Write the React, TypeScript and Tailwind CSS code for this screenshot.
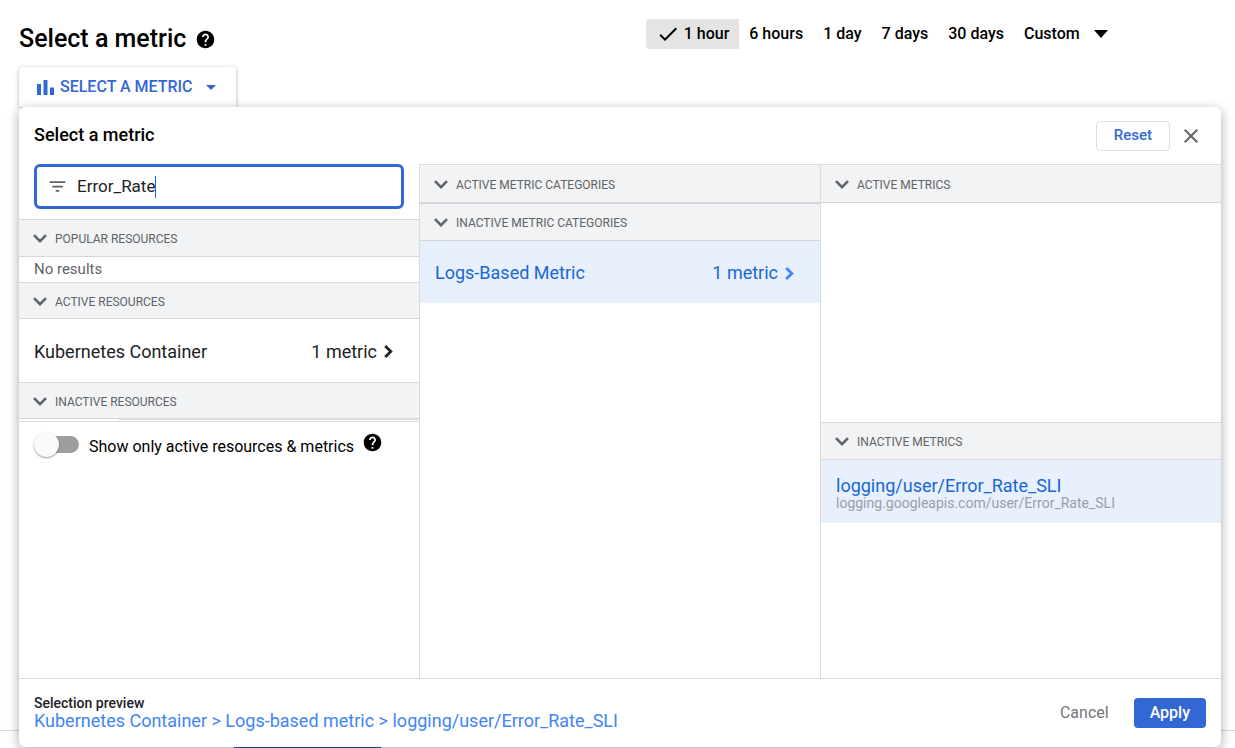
import { ReactNode, useState } from "react";

import { MdArrowDropDown, MdCheck, MdClose, MdFilterList, MdHelp } from "react-icons/md";

const timeRanges = ["1 hour", "6 hours", "1 day", "7 days", "30 days"];

const ChevronDown = () => (
  <svg viewBox="0 0 14 10" className="h-[10px] w-[14px] shrink-0" fill="none" stroke="#5f6368" strokeWidth="2.6">
    <path d="M1 1.2 7 7.2 13 1.2" />
  </svg>
);

const ChevronRight = () => (
  <svg viewBox="0 0 9 13" className="h-[13px] w-[9px] shrink-0" fill="none" stroke="currentColor" strokeWidth="2.8">
    <path d="M1.2 1 6.8 6.5 1.2 12" />
  </svg>
);

const BarsIcon = () => (
  <svg viewBox="0 0 17 15" className="h-[15px] w-[17px] shrink-0" fill="currentColor">
    <path d="M0 4h4v11H0zM6.5 0h4v15h-4zM13 7.5h4V15h-4z" />
  </svg>
);

interface SectionHeaderProps {
  text: string;
  classes?: string;
}

const SectionHeader = ({ text, classes = "h-[38px]" }: SectionHeaderProps) => (
  <h3 className={`border-[#d5d7da] bg-[#f1f3f4] ${classes}`}>
    <button type="button" className="flex h-full w-full items-center gap-2 px-[14px] pt-[2px] text-xs text-[#5f6368]">
      <ChevronDown />
      {text}
    </button>
  </h3>
);

interface MetricRowProps {
  name: string;
  count: string;
  classes: string;
  chevronColor?: string;
}

const MetricRow = ({ name, count, classes, chevronColor = "" }: MetricRowProps) => (
  <button
    type="button"
    className={`flex w-full items-center justify-between pl-[15px] pr-[26px] pt-[2px] text-lg ${classes}`}
  >
    <span>{name}</span>
    <span className="flex items-center gap-[7px]">
      {count}
      <span className={chevronColor}>
        <ChevronRight />
      </span>
    </span>
  </button>
);

const Column = ({ children }: { children: ReactNode }) => (
  <section className="flex min-w-0 flex-1 flex-col border-l border-t border-[#dadce0]">{children}</section>
);

const App = () => {
  const [range, setRange] = useState("1 hour");
  const [filter, setFilter] = useState("Error_Rate");
  const [onlyActive, setOnlyActive] = useState(false);

  return (
    <main className="relative isolate flex min-h-screen flex-col overflow-hidden bg-white pb-px pl-[19px] pr-[14px] font-[Roboto,'Liberation_Sans',sans-serif] text-black">
      <div className="absolute inset-x-0 bottom-0 -z-10 flex h-[18px] items-end border-t border-[#dadce0] pl-[234px]">
        <span className="h-3 w-[147px] bg-[#2a56a5]" />
      </div>

      <header className="flex h-[67px] items-start justify-between pr-[113px] pt-[19px]">
        <h1 className="flex items-center gap-[9px] pt-[2px] text-[25px] leading-9 font-medium">
          Select a metric
          <MdHelp className="size-[21px]" />
        </h1>
        <div className="flex items-center text-base font-medium">
          {timeRanges.map(time => (
            <button
              key={time}
              type="button"
              onClick={() => setRange(time)}
              className={`flex h-[30px] items-center px-[10px] ${range === time ? "rounded-l-sm bg-[#e4e4e4]" : ""}`}
            >
              {range === time && <MdCheck className="mr-1 size-6" />}
              {time}
            </button>
          ))}
          <label className="relative flex items-center pl-[10px]">
            <select aria-label="Custom range" className="appearance-none bg-transparent pr-7 outline-none">
              <option>Custom</option>
            </select>
            <svg viewBox="0 0 14 8" className="pointer-events-none absolute right-0 h-2 w-[14px]">
              <path d="M0 0h14L7 8z" />
            </svg>
          </label>
        </div>
      </header>

      <button
        type="button"
        aria-expanded="true"
        className="flex h-10 items-center gap-[6px] self-start rounded-t pl-[18px] pr-[13px] text-base font-medium text-[#3367d6] shadow-[0_1px_4px_rgba(0,0,0,0.3)]"
      >
        <BarsIcon />
        SELECT A METRIC
        <MdArrowDropDown className="size-6" />
      </button>

      <div
        role="dialog"
        aria-label="Select a metric"
        className="z-10 flex flex-1 flex-col rounded-md bg-white shadow-[0_3px_12px_rgba(0,0,0,0.35)]"
      >
        <div className="flex h-[57px] items-center justify-between pl-[15px] pr-[18px]">
          <h2 className="pb-[2px] text-lg font-medium">Select a metric</h2>
          <div className="flex items-center gap-[9px]">
            <button
              type="button"
              className="h-[30px] rounded border border-[#dadce0] px-[17px] text-[15px] font-medium text-[#3367d6]"
            >
              Reset
            </button>
            <button type="button" aria-label="Close" className="text-[#5f6368]">
              <MdClose className="size-6" />
            </button>
          </div>
        </div>

        <div className="flex flex-1">
          <section className="flex min-w-0 flex-1 flex-col">
            <div className="px-[15px] pb-[10px]">
              <label className="flex h-[45px] cursor-text items-center rounded-md border-[3px] border-[#3367d6] pl-[10px]">
                <MdFilterList className="mr-[9px] size-[21px] text-[#5f6368]" />
                <input
                  type="text"
                  aria-label="Filter"
                  value={filter}
                  onChange={event => setFilter(event.target.value)}
                  className="field-sizing-content text-[17px] text-[#202124] caret-transparent outline-none"
                />
                <span className="h-[22px] w-px shrink-0 bg-[#1a5cff]" />
              </label>
            </div>
            <SectionHeader text="POPULAR RESOURCES" classes="h-[38px] border-y" />
            <p className="h-[25px] px-[15px] text-[15px] leading-6 text-[#5f6368]">No results</p>
            <SectionHeader text="ACTIVE RESOURCES" classes="h-[37px] border-y" />
            <MetricRow name="Kubernetes Container" count="1 metric" classes="h-[63px] text-[#202124]" />
            <SectionHeader text="INACTIVE RESOURCES" classes="h-[37px] border-y" />
            <div className="flex h-[3px] border-b border-[#dadce0]">
              <span className="w-1/4" />
              <span className="h-px flex-1 bg-[#dadce0]" />
            </div>
            <div className="flex items-start gap-2 px-[15px] pt-[10px]">
              <label className="flex items-start gap-[10px] text-base">
                <span className="flex h-[25px] w-[45px] items-center">
                  <input
                    type="checkbox"
                    role="switch"
                    checked={onlyActive}
                    onChange={() => setOnlyActive(!onlyActive)}
                    className="peer sr-only"
                  />
                  <span className="flex h-[17px] w-full items-center rounded-full bg-linear-to-r from-transparent from-20% to-[#9e9e9e] to-20% peer-checked:justify-end">
                    <span className="size-[25px] rounded-full bg-[#fafafa] shadow-[0_1px_2px_rgba(0,0,0,0.4)]" />
                  </span>
                </span>
                <span className="pt-[3px]">Show only active resources &amp; metrics</span>
              </label>
              <MdHelp className="size-[21px]" />
            </div>
          </section>

          <Column>
            <SectionHeader text="ACTIVE METRIC CATEGORIES" classes="h-[39px] border-b-2" />
            <SectionHeader text="INACTIVE METRIC CATEGORIES" classes="h-[37px] border-b" />
            <MetricRow
              name="Logs-Based Metric"
              count="1 metric"
              classes="h-[62px] bg-[#e8f0fe] text-[#1967d2]"
              chevronColor="text-[#4285f4]"
            />
          </Column>

          <Column>
            <SectionHeader text="ACTIVE METRICS" classes="h-[38px] border-b" />
            <div className="h-[219px]" />
            <SectionHeader text="INACTIVE METRICS" classes="h-[38px] border-y" />
            <button type="button" className="h-[63px] bg-[#e8f0fe] px-[15px] pt-1 text-left">
              <span className="block text-lg leading-[18px] text-[#1967d2]">logging/user/Error_Rate_SLI</span>
              <span className="block text-sm leading-4 text-[#9aa0a6]">logging.googleapis.com/user/Error_Rate_SLI</span>
            </button>
          </Column>
        </div>

        <footer className="flex h-[69px] items-center justify-between border-t border-[#dadce0] px-[15px]">
          <div className="pb-px">
            <p className="text-sm leading-4 font-medium text-[#202124]">Selection preview</p>
            <p className="text-lg leading-5 text-[#4285f4]">
              Kubernetes Container &gt; Logs-based metric &gt; logging/user/Error_Rate_SLI
            </p>
          </div>
          <div className="flex items-center gap-[10px] text-base">
            <button type="button" className="h-[30px] px-[15px] text-[#757575]">
              Cancel
            </button>
            <button type="button" className="h-[30px] rounded bg-[#3367d6] px-4 font-medium text-white">
              Apply
            </button>
          </div>
        </footer>
      </div>
    </main>
  );
};

export default App;
